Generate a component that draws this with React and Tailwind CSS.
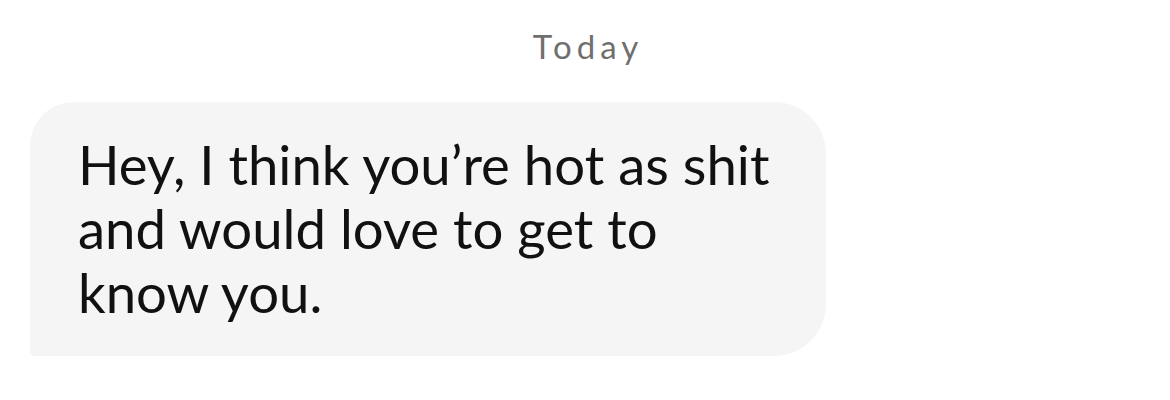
export default function App() {
  return (
    <div className="w-[1170px] h-[400px] bg-white flex flex-col font-['Lato','Liberation_Sans',sans-serif]">
      <div className="pt-[25px] pl-[6px] text-center text-[33px] leading-[42px] tracking-[5px] text-[#6f6f6f]">Today</div>
      <div className="mt-[35px] ml-[30px] w-[796px] h-[254px] bg-[#f5f5f5] rounded-tl-[44px] rounded-tr-[52px] rounded-br-[52px] rounded-bl-[4px] pl-[48px] pt-[30px]">
        <p className="text-[54.5px] leading-[64px] text-[#111111]">
          Hey, I think you’re hot as shit
          <br />
          and would love to get to
          <br />
          know you.
        </p>
      </div>
    </div>
  );
}
